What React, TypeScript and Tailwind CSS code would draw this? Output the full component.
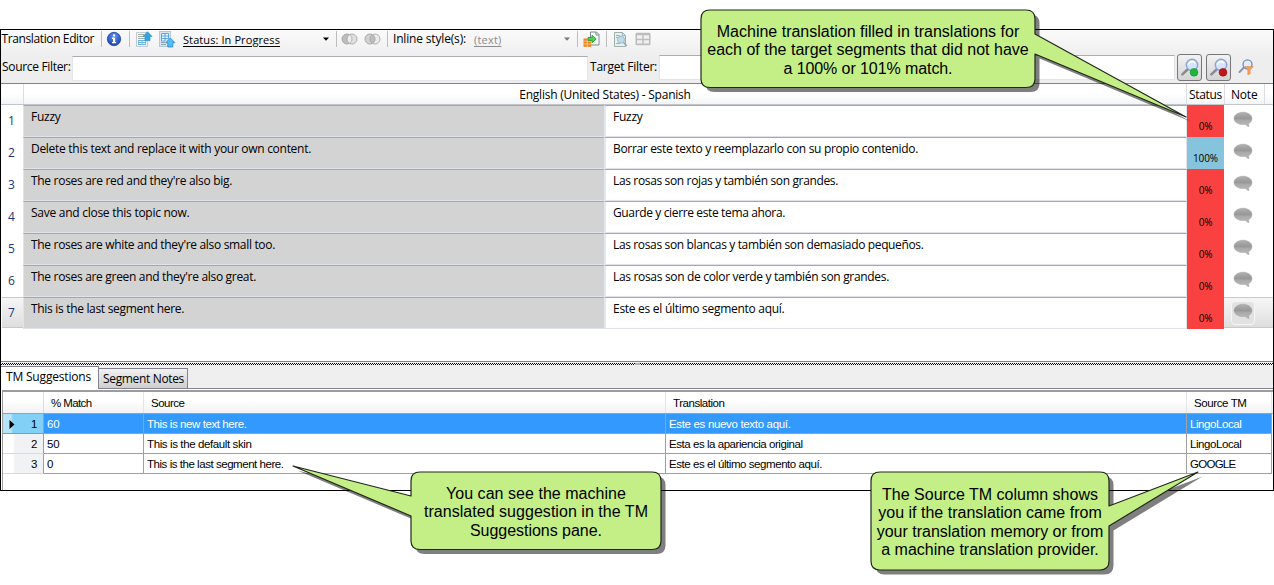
import { useLayoutEffect, useRef, type ReactNode } from "react";
import clsx from "clsx";

const UI = "font-['Open_Sans','Noto_Sans',sans-serif]";
const GRID = "font-['Liberation_Sans',Arial,sans-serif]";

/* Single line of text, tracked so that it fills `w` pixels. */
function Fit({ w, className, children }: { w: number; className?: string; children: string }) {
  const ref = useRef<HTMLSpanElement>(null);
  useLayoutEffect(() => {
    const el = ref.current;
    if (!el) return;
    el.style.letterSpacing = "0px";
    const natural = el.getBoundingClientRect().width;
    el.style.letterSpacing = `${(w - natural) / children.length}px`;
  }, [w, children]);
  return (
    <span ref={ref} className={clsx("inline-block shrink-0 whitespace-pre", className)}>
      {children}
    </span>
  );
}

const Sep = ({ className }: { className: string }) => (
  <div className={clsx("h-4 w-px shrink-0 bg-[#bdbdbd]", className)} />
);

const InfoIcon = () => (
  <svg width="16" height="16" viewBox="0 0 16 16" className="ml-[4px] shrink-0">
    <defs>
      <radialGradient id="info" cx="50%" cy="30%" r="70%">
        <stop offset="0" stopColor="#5f95ee" />
        <stop offset="1" stopColor="#1a40b4" />
      </radialGradient>
    </defs>
    <circle cx="8" cy="8" r="6.7" fill="url(#info)" stroke="#2449a6" strokeWidth=".8" />
    <rect x="7" y="3.4" width="2.2" height="2" fill="#fff" />
    <path d="M6 6.6h3.2v4.4h1v1.3H6V11h1V7.9H6z" fill="#fff" />
  </svg>
);

const arrowUp = "M.4 5.200 5 .5l4.600 4.700H7.500V9.500H2.500V5.200z";

const DocUpIcon = () => (
  <svg width="17" height="17" viewBox="0 0 17 17" className="ml-[6px] shrink-0">
    <rect x=".5" y="1.500" width="11" height="14" fill="#f0f4f4" stroke="#c6cdce" />
    <path d="M2 3.500h6M2 5.500h6M2 7.500h7" stroke="#a3afaa" />
    <path d="M2 9.500h8M2 11.500h8M2 13.500h8" stroke="#6cb6e6" />
    <path d="M2.500 9v5M6 9v5M9.500 9v5" stroke="#6cb6e6" strokeWidth=".8" />
    <path d={arrowUp} transform="translate(6.500 .2)" fill="#35a5de" stroke="#2d8ec6" strokeWidth=".6" />
  </svg>
);

const GridUpIcon = () => (
  <svg width="17" height="17" viewBox="0 0 17 17" className="ml-[6px] shrink-0">
    <rect x=".5" y=".5" width="11" height="15" fill="#d3e6f2" stroke="#b4c9d8" />
    <path d="M2.500 2.500h7v5h-7zM2.500 5h7M6 2.500v5M2.500 7.500V10H6V7.500" fill="#f0f9ff" stroke="#4d9fdb" strokeWidth=".9" />
    <path d="M2 11.500h4M2 13.500h5" stroke="#93a3aa" />
    <path d={arrowUp} transform="translate(6.300 6.500)" fill="#55bdf3" stroke="#2c86c6" strokeWidth=".8" />
  </svg>
);

const Rings = ({ union, className }: { union?: boolean; className: string }) => (
  <svg width="17" height="12" viewBox="0 0 17 12" className={clsx("shrink-0", className)}>
    <circle cx="6" cy="6" r="5" fill={union ? "#d2d2d2" : "#bdbdbd"} stroke="#a8a8a8" />
    <circle cx="11" cy="6" r="5" fill="#dedede" fillOpacity={union ? 0.5 : 0.95} stroke="#b0b0b0" />
    <path d="M8.5 1.700a5 5 0 0 1 0 8.600 5 5 0 0 1 0-8.600z" fill={union ? "#bcbcbc" : "#ececec"} stroke="#a9a9a9" strokeWidth=".8" />
  </svg>
);

const Caret = ({ className, fill }: { className: string; fill: string }) => (
  <svg width="6" height="4" viewBox="0 0 6 4" className={clsx("shrink-0", className)}>
    <path d="M0 .5h6L3 3.7z" fill={fill} />
  </svg>
);

const ApplyIcon = () => (
  <svg width="17" height="17" viewBox="0 0 17 17" className="ml-[5px] shrink-0">
    <path d="M7.500 1h6L16 3.500V14H7.500z" fill="#fbfcfc" stroke="#7c8a8c" />
    <path d="M13 1v3h3" fill="none" stroke="#7c8a8c" />
    <path d="M.5 7.500h7.600v8.300H.5z" fill="#ee8420" />
    <path d="M.5 10.200h7.600M.5 13h7.600M4.300 7.500v8.300" stroke="#ffd0a0" strokeWidth=".8" />
    <path d="M5 6.500h4V4.200l4.200 3.800L9 11.800V9.400H5z" fill="#4fd44e" stroke="#2c9a3a" strokeWidth=".9" />
  </svg>
);

const PreviewIcon = () => (
  <svg width="16" height="17" viewBox="0 0 16 17" className="ml-[6px] shrink-0">
    <path d="M1.500 1.500h8l3 3v11h-11z" fill="#e9f0ee" stroke="#9fb0ac" />
    <path d="M9.300 1.500v3.200h3.200M3 4.500h4M3 6.500h2M3 12.500h4" fill="none" stroke="#9fb0ac" />
    <circle cx="8" cy="8.700" r="3.500" fill="#bcdcec" stroke="#9bb9c9" />
    <path d="m10.600 11.500 3.200 3.500" stroke="#9aaab4" strokeWidth="1.800" />
  </svg>
);

const TableIcon = () => (
  <svg width="16" height="14" viewBox="0 0 16 14" className="ml-[6px] shrink-0">
    <rect x=".5" y=".8" width="15" height="12.400" rx="1" fill="#bcbcbc" />
    <path d="M2 3.300h5.300v3.400H2zM8.700 3.300H14v3.400H8.700zM2 8.200h5.300v3.400H2zM8.700 8.200H14v3.400H8.700z" fill="#efefef" />
  </svg>
);

const Magnifier = ({ kind }: { kind: "green" | "red" | "filter" }) => (
  <svg width="20" height="20" viewBox="0 0 20 20" className="shrink-0">
    {kind === "filter" ? (
      <>
        <path d="M8 9.500 3.500 14" stroke="#8496b8" strokeWidth="2" strokeLinecap="round" />
        <circle cx="11.500" cy="6.300" r="4.500" fill="#e2ecfc" stroke="#6c8bd2" strokeWidth="1.300" />
        <path d="M8.600 8.500h8.800l-3.200 3.600v3.600l-2.400 1.200v-4.800z" fill="#f2a057" stroke="#d98a48" strokeWidth=".5" />
      </>
    ) : (
      <>
        <path d="M7.800 11.200 2.400 16.400" stroke="#8c8c90" strokeWidth="2.600" strokeLinecap="round" />
        <circle cx="12" cy="7" r="5.700" fill="#d6e4fa" stroke="#8ba5dc" strokeWidth="1.400" />
        <path d="M8.500 6.600a3.600 3.600 0 0 1 6.600-1.200" fill="none" stroke="#fff" strokeWidth="1.600" />
        {kind === "green" ? (
          <circle cx="14" cy="14.300" r="3.900" fill="#1fb53c" stroke="#169430" strokeWidth=".6" />
        ) : (
          <circle cx="14" cy="14.300" r="3.900" fill="#c1161c" stroke="#960f14" strokeWidth=".6" />
        )}
      </>
    )}
  </svg>
);

const Bubble = () => (
  <svg width="20" height="18" viewBox="0 0 20 18" className="shrink-0">
    <defs>
      <linearGradient id="bubble" x1="0" y1="0" x2="0" y2="1">
        <stop offset="0" stopColor="#b0b0b0" />
        <stop offset=".45" stopColor="#979797" />
        <stop offset=".55" stopColor="#a9a9a9" />
        <stop offset="1" stopColor="#bbbbbb" />
      </linearGradient>
    </defs>
    <path d="M10 1.200c5 0 9 2.700 9 6.200 0 2.300-1.300 4.100-3.200 5.200.1 1.300.1 2.100.2 3.200-1.900-.6-3-1.500-3.700-2.500-.7.1-1.500.2-2.300.2-5 0-9-2.600-9-6.100s4-6.200 9-6.200z" fill="url(#bubble)" stroke="#a9a9a9" strokeWidth=".5" />
  </svg>
);

type Segment = { source: string; sw: number; target: string; tw: number; match: string };

const segments: Segment[] = [
  { source: "Fuzzy", sw: 29.5, target: "Fuzzy", tw: 29.5, match: "0%" },
  { source: "Delete this text and replace it with your own content.", sw: 280, target: "Borrar este texto y reemplazarlo con su propio contenido.", tw: 305, match: "100%" },
  { source: "The roses are red and they're also big.", sw: 201, target: "Las rosas son rojas y también son grandes.", tw: 225, match: "0%" },
  { source: "Save and close this topic now.", sw: 158.5, target: "Guarde y cierre este tema ahora.", tw: 172, match: "0%" },
  { source: "The roses are white and they're also small too.", sw: 244, target: "Las rosas son blancas y también son demasiado pequeños.", tw: 310.5, match: "0%" },
  { source: "The roses are green and they're also great.", sw: 225, target: "Las rosas son de color verde y también son grandes.", tw: 276, match: "0%" },
  { source: "This is the last segment here.", sw: 153, target: "Este es el último segmento aquí.", tw: 171.5, match: "0%" },
];

function SegmentRow({ s, n }: { s: Segment; n: number }) {
  const current = n === 7;
  const shade = current && "border-y border-[#c9c9c9] bg-linear-to-b from-[#f6f6f6] to-[#dedede]";
  return (
    <div className="flex h-8 pl-px">
      <div className={clsx("flex h-[31px] w-[21px] pl-[6px] text-[#1f3478]", current ? "pt-[7px]" : "pt-[8px]", shade)}>
        <Fit w={7}>{String(n)}</Fit>
      </div>
      <div className="h-8 w-[581px] border-t border-b border-l border-t-[#a5a6ac] border-b-[#dfe3ea] border-l-[#dfe3ea] bg-[#d3d3d3] pt-[3px] pl-[7px]">
        <Fit w={s.sw}>{s.source}</Fit>
      </div>
      <div className="h-8 w-[583px] border-t border-r border-b border-l-2 border-t-[#a5a6ac] border-r-[#e2e3ea] border-b-[#e2e3ea] border-l-[#e2e6ed] bg-white pt-[3px] pl-[7px]">
        <Fit w={s.tw}>{s.target}</Fit>
      </div>
      <div className={clsx("flex h-8 w-[37px] justify-center pt-[14px] text-[10px] leading-[14px]", s.match === "100%" ? "bg-[#86c3dc]" : "bg-[#f94141]")}>
        <Fit w={s.match === "100%" ? 25 : 13.5}>{s.match}</Fit>
      </div>
      <div className={clsx("flex h-[31px] flex-1 pl-[7px]", shade)}>
        <div className={clsx("flex h-6 w-6 justify-center", current ? "mt-[3px] rounded-sm border border-[#f6f6f6] bg-[#e2e2e2] pt-px" : "pt-[6px]")}>
          <Bubble />
        </div>
      </div>
    </div>
  );
}

const suggestions = [
  { match: "60", mw: 12.5, source: "This is new text here.", sw: 99.5, target: "Este es nuevo texto aquí.", tw: 121.5, tm: "LingoLocal", lw: 51.5 },
  { match: "50", mw: 12.5, source: "This is the default skin", sw: 104.5, target: "Esta es la apariencia original", tw: 133.5, tm: "LingoLocal", lw: 51.5 },
  { match: "0", mw: 6, source: "This is the last segment here.", sw: 136.5, target: "Este es el último segmento aquí.", tw: 153, tm: "GOOGLE", lw: 45.5 },
];

function Callout({ className, w, h, path, children }: { className: string; w: number; h: number; path: string; children: ReactNode }) {
  return (
    <div className={clsx("absolute", GRID, className)}>
      <svg width={w} height={h} viewBox={`0 0 ${w} ${h}`} className="absolute top-0 left-0 overflow-visible">
        <path d={path} transform="translate(4.500 4.500)" fill="#000" fillOpacity=".5" />
        <path d={path} fill="#c3ef86" stroke="#20281a" strokeWidth="1.2" strokeLinejoin="round" />
      </svg>
      <div className="relative flex flex-col items-center text-[16px] leading-[18.4px] text-black">{children}</div>
    </div>
  );
}

export default function App() {
  return (
    <div className={clsx("relative h-[585px] w-[1274px] overflow-hidden bg-white pt-[29px] text-[12px] leading-4 text-black", UI)}>
      <div className="flex h-[462px] w-[1274px] flex-col border border-black bg-white">
        {/* Toolbar */}
        <div className="flex h-[53px] shrink-0 flex-col bg-linear-to-b from-[#fbfbfb] to-[#eeeeee] to-50%">
          <div className="flex h-[18px] items-center">
            <Fit w={92.5} className="ml-[.5px]">Translation Editor</Fit>
            <Sep className="ml-[7px]" />
            <InfoIcon />
            <Sep className="ml-[7px]" />
            <DocUpIcon />
            <GridUpIcon />
            <Fit w={97} className="ml-[7px] pt-[1px] text-[11px] underline underline-offset-2">Status: In Progress</Fit>
            <Caret className="ml-[43px]" fill="#000" />
            <Sep className="ml-[7px]" />
            <Rings className="ml-[4px]" />
            <Rings union className="ml-[6px]" />
            <Sep className="ml-[6px]" />
            <Fit w={73} className="ml-[5px]">Inline style(s):</Fit>
            <Fit w={27.5} className="ml-[8px] pt-[1px] text-[11px] text-[#8c8c8c] underline underline-offset-2">(text)</Fit>
            <Caret className="ml-[62px]" fill="#777" />
            <Sep className="ml-[7px]" />
            <ApplyIcon />
            <Sep className="ml-[6px]" />
            <PreviewIcon />
            <TableIcon />
          </div>
          <div className="flex h-[35px] items-start pt-[6px]">
            <Fit w={68.5} className="ml-px pt-[5px]">Source Filter:</Fit>
            <div className="ml-[1.500px] mt-[2px] h-[25px] w-[516px] border border-[#e3e5ea] border-t-[#abadb3] bg-white" />
            <Fit w={67} className="ml-[2px] pt-[5px]">Target Filter:</Fit>
            <div className="ml-[2px] mt-px h-[25px] w-[516px] border border-[#e3e5ea] border-t-[#abadb3] bg-white" />
            <div className="ml-[2px] flex h-[27px] w-[25px] items-center justify-center rounded-[3px] border border-[#777] bg-linear-to-b from-[#f2f2f2] to-[#d4d4d4]">
              <Magnifier kind="green" />
            </div>
            <div className="ml-[4px] flex h-[27px] w-[25px] items-center justify-center rounded-[3px] border border-[#777] bg-linear-to-b from-[#f2f2f2] to-[#d4d4d4]">
              <Magnifier kind="red" />
            </div>
            <div className="ml-[5px] mt-[4px]">
              <Magnifier kind="filter" />
            </div>
          </div>
        </div>
        <div className="h-px shrink-0 bg-[#828290]" />

        {/* Segment grid */}
        <div className="flex h-[21px] shrink-0 border-b border-[#c3c5cb] bg-linear-to-b from-white via-white to-[#f3f4f6]">
          <div className="w-[23px] border-r border-[#dcdde1] " />
          <div className="flex w-[1163px] justify-center border-r border-[#dcdde1] pt-[3px]">
            <Fit w={171.5}>English (United States) - Spanish</Fit>
          </div>
          <div className="w-[38px] border-r border-[#dcdde1] pt-[3px] pl-[2px]">
            <Fit w={33}>Status</Fit>
          </div>
          <div className="w-[40px] border-r border-[#dcdde1] pt-[3px] pl-[6px]">
            <Fit w={26.500}>Note</Fit>
          </div>
        </div>
        <div className="h-[256px] shrink-0">
          {segments.map((s, i) => (
            <SegmentRow key={i} s={s} n={i + 1} />
          ))}
        </div>

        {/* Splitter */}
        <div className="h-px shrink-0 bg-[#828290]" />
        <div className="h-px shrink-0 bg-[#f0f0f0]" />
        <div className="flex h-[2px] shrink-0 justify-center bg-[conic-gradient(#000_25%,#fff_0_50%,#000_0_75%,#fff_0)] bg-size-[2px_2px]">
          <div className="h-[2px] w-[5px] bg-[#b5b5b5]" />
        </div>

        {/* Suggestion tabs */}
        <div className="flex h-[24px] shrink-0 items-end bg-[#efefef]">
          <div className="h-[23px] w-[98px] border-t border-r border-[#828290] bg-white pt-[2px] pl-[5px]">
            <Fit w={85}>TM Suggestions</Fit>
          </div>
          <div className="flex h-[21px] w-[89px] border-t border-r border-b border-[#828290] bg-linear-to-b from-[#f2f2f2] to-[#cfcfcf] pt-[2px] pl-[4px]">
            <Fit w={81}>Segment Notes</Fit>
          </div>
          <div className="h-px flex-1 bg-[#828290]" />
        </div>
        <div className="h-px shrink-0 bg-white" />

        {/* Suggestion grid */}
        <div className={clsx("ml-px flex-1 border-t-2 border-l border-[#9c9c9c] bg-white text-[11.500px] leading-[14px]", GRID)}>
          <div className="flex h-[22px] border-b border-[#a0a0a0] bg-linear-to-b from-white from-40% to-[#f1f2f4]">
            <div className="w-[41px] border-r border-[#dcdde1]" />
            <div className="w-[100px] border-r border-[#e4e5e8] pt-[4px] pl-[7px]"><Fit w={40.500}>% Match</Fit></div>
            <div className="w-[522px] border-r border-[#e4e5e8] pt-[4px] pl-[7px]"><Fit w={33.500}>Source</Fit></div>
            <div className="w-[521px] border-r border-[#e4e5e8] pt-[4px] pl-[7px]"><Fit w={51.500}>Translation</Fit></div>
            <div className="w-[85px] border-r border-[#e4e5e8] pt-[4px] pl-[7px]"><Fit w={52.500}>Source TM</Fit></div>
          </div>
          {suggestions.map((s, i) => {
            const on = i === 0;
            const cell = clsx("h-5 border-r border-b border-[#a0a0a0] pt-[3px] pl-[3px]", on && "bg-[#3399ff] text-white");
            return (
              <div key={i} className="flex h-5">
                <div className={clsx("flex h-5 w-[41px] items-start border-r border-b border-r-[#a0a0a0] pt-[3px] pl-[6px]", on ? "border-b-[#5fa8cc] bg-linear-to-r from-[#b5e3f7] from-20% to-[#82d0f5] to-25%" : "border-b-[#d8dade] bg-linear-to-r from-white from-25% to-[#f1f2f4] to-30%")}>
                  <svg width="6" height="10" viewBox="0 0 6 10" className="mt-[3px]">
                    {on && <path d="M.5 0v9L5.500 4.500z" fill="#000" />}
                  </svg>
                  <span className="ml-[16px]"><Fit w={6}>{String(i + 1)}</Fit></span>
                </div>
                <div className={clsx(cell, "w-[100px]")}><Fit w={s.mw}>{s.match}</Fit></div>
                <div className={clsx(cell, "w-[522px]")}><Fit w={s.sw}>{s.source}</Fit></div>
                <div className={clsx(cell, "w-[521px]")}><Fit w={s.tw}>{s.target}</Fit></div>
                <div className={clsx(cell, "w-[85px]")}><Fit w={s.lw}>{s.tm}</Fit></div>
              </div>
            );
          })}
        </div>
      </div>

      {/* Annotations */}
      <Callout
        className="top-[10px] left-[701px] w-[334px] pt-[13px]"
        w={334}
        h={78}
        path="M9 0H325Q334 0 334 9V24L485 107L334 44V69Q334 77.500 325 77.500H9Q0 77.500 0 69V9Q0 0 9 0Z"
      >
        <Fit w={302.500}>Machine translation filled in translations for</Fit>
        <Fit w={321.500}>each of the target segments that did not have</Fit>
        <Fit w={169}>a 100% or 101% match.</Fit>
      </Callout>
      <Callout
        className="top-[472px] left-[411px] w-[250px] pt-[13px]"
        w={250}
        h={78}
        path="M9 0H241Q250 0 250 9V69Q250 77.500 241 77.500H9Q0 77.500 0 69V44L-118 -6L0 24V9Q0 0 9 0Z"
      >
        <Fit w={180}>You can see the machine</Fit>
        <Fit w={224}>translated suggestion in the TM</Fit>
        <Fit w={132}>Suggestions pane.</Fit>
      </Callout>
      <Callout
        className="top-[472px] left-[871px] w-[238px] pt-[14px]"
        w={238}
        h={98}
        path="M9 0H229Q238 0 238 9V34L327 0L238 54V89Q238 98 229 98H9Q0 98 0 89V9Q0 0 9 0Z"
      >
        <Fit w={216}>The Source TM column shows</Fit>
        <Fit w={223.500}>you if the translation came from</Fit>
        <Fit w={226.500}>your translation memory or from</Fit>
        <Fit w={217.500}>a machine translation provider.</Fit>
      </Callout>
    </div>
  );
}
